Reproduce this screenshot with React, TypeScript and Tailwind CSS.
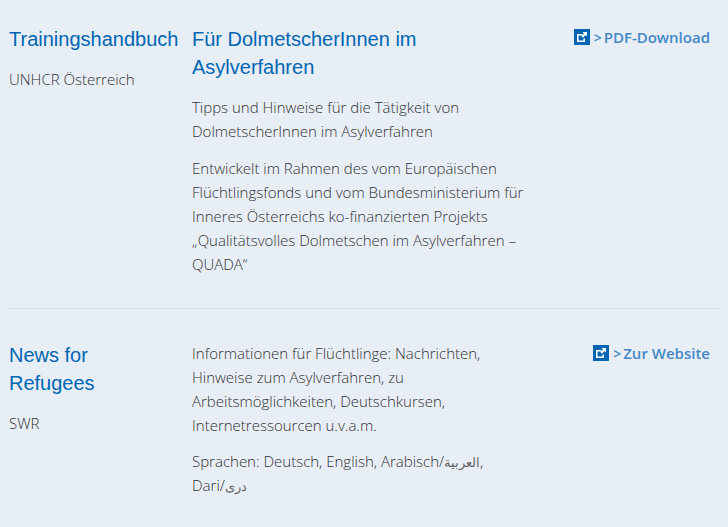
import type { ReactNode } from "react";

function LinkIcon() {
  return (
    <svg width="16" height="16" viewBox="0 0 16 16" className="shrink-0">
      <rect width="16" height="16" fill="#0066b3" />
      <path d="M3 5h5v1.6H4.6v4.8h4.8V9.5H11V13H3z" fill="#fff" />
      <path d="M8.5 3H13v4.5l-1.4-1.4-2.7 2.7-1.7-1.7 2.7-2.7z" fill="#fff" />
    </svg>
  );
}

function Entry({
  title,
  org,
  link,
  children,
}: {
  title: string;
  org: string;
  link: string;
  children: ReactNode;
}) {
  return (
    <div className="flex">
      <div className="w-[170px] mr-[13px] shrink-0">
        <h2 className="text-[20px] leading-[28px] text-[#0066b3] font-['Liberation_Sans',sans-serif]">{title}</h2>
        <p className="mt-[14px] text-[15px] leading-[24px] font-light">{org}</p>
      </div>
      <div className="w-[340px] shrink-0">{children}</div>
      <div className="flex-1 flex justify-end items-center h-[24px] gap-[4px]">
        <LinkIcon />
        <span className="text-[15px] font-semibold text-[#4488c8]">
          <span className="mr-[1px] text-[14px]">&gt;</span>{" "}
          <span className="ml-[-3px]">{link}</span>
        </span>
      </div>
    </div>
  );
}

function Arabic({ children }: { children: string }) {
  return <span className="text-[12.5px] leading-none text-[#666]">{children}</span>;
}

export default function App() {
  return (
    <div className="w-[728px] h-[527px] overflow-hidden bg-[#e7eef6] pl-[9px] pr-[18px] pt-[25px] text-[#333] font-['Open_Sans',sans-serif]">
      <Entry title="Trainingshandbuch" org="UNHCR Österreich" link="PDF-Download">
        <h2 className="text-[20px] leading-[28px] text-[#0066b3] font-['Liberation_Sans',sans-serif]">
          Für DolmetscherInnen im Asylverfahren
        </h2>
        <p className="mt-[14px] text-[15px] leading-[24px] font-light">
          Tipps und Hinweise für die Tätigkeit von DolmetscherInnen im Asylverfahren
        </p>
        <p className="mt-[13px] text-[15px] leading-[24px] font-light">
          Entwickelt im Rahmen des vom Europäischen Flüchtlingsfonds und vom Bundesministerium für Inneres Österreichs
          ko-finanzierten Projekts „Qualitätsvolles Dolmetschen im Asylverfahren – QUADA“
        </p>
      </Entry>
      <div className="mt-[32px] mb-[32px] mr-[-9px] border-t border-[#d8dfe6]" />
      <Entry title="News for Refugees" org="SWR" link="Zur Website">
        <p className="text-[15px] leading-[24px] font-light">
          Informationen für Flüchtlinge: Nachrichten, Hinweise zum Asylverfahren, zu Arbeitsmöglichkeiten, Deutschkursen,
          Internetressourcen u.v.a.m.
        </p>
        <p className="mt-[12px] text-[15px] leading-[24px] font-light">
          Sprachen: Deutsch, English, Arabisch/<Arabic>العربية</Arabic>,
          <br />
          Dari/<Arabic>دری</Arabic>
        </p>
      </Entry>
    </div>
  );
}
